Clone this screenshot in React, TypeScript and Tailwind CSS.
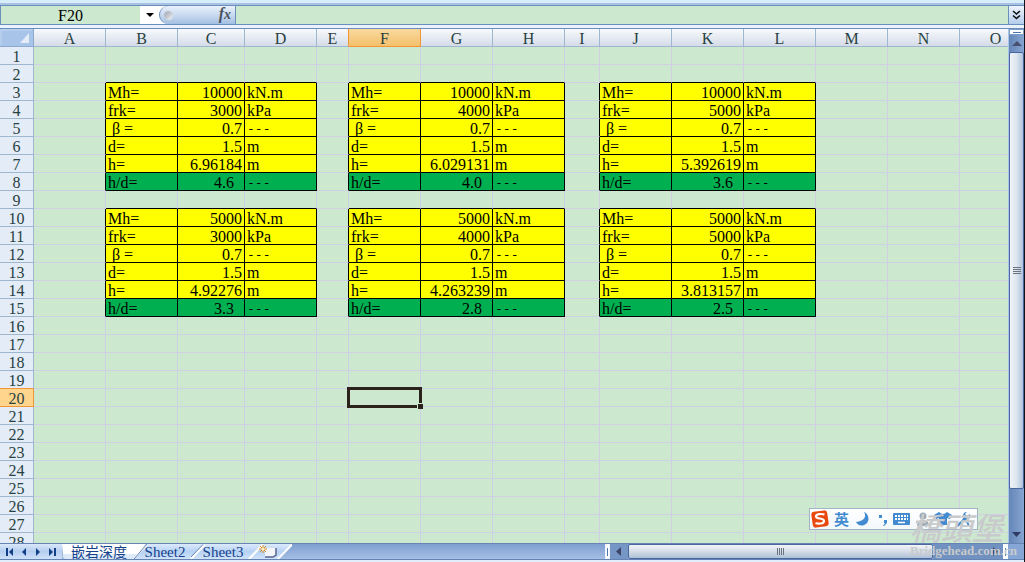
import React from "react";

type Column = { name: string; width: number };

const COLUMNS: Column[] = [
  { name: "A", width: 72 },
  { name: "B", width: 72 },
  { name: "C", width: 67 },
  { name: "D", width: 72 },
  { name: "E", width: 32 },
  { name: "F", width: 72 },
  { name: "G", width: 72 },
  { name: "H", width: 72 },
  { name: "I", width: 35 },
  { name: "J", width: 72 },
  { name: "K", width: 72 },
  { name: "L", width: 72 },
  { name: "M", width: 72 },
  { name: "N", width: 72 },
  { name: "O", width: 72 },
];

const ROW_COUNT = 28;
const ACTIVE = { col: 5, row: 20 };

type Block = { col: number; row: number; mh: string; frk: string; h: string; ratio: string };

const BLOCKS: Block[] = [
  { col: 1, row: 3, mh: "10000", frk: "3000", h: "6.96184", ratio: "4.6" },
  { col: 5, row: 3, mh: "10000", frk: "4000", h: "6.029131", ratio: "4.0" },
  { col: 9, row: 3, mh: "10000", frk: "5000", h: "5.392619", ratio: "3.6" },
  { col: 1, row: 10, mh: "5000", frk: "3000", h: "4.92276", ratio: "3.3" },
  { col: 5, row: 10, mh: "5000", frk: "4000", h: "4.263239", ratio: "2.8" },
  { col: 9, row: 10, mh: "5000", frk: "5000", h: "3.813157", ratio: "2.5" },
];

type CellData = { text: string; kind: "label" | "value" | "unit"; result: boolean };

const CELLS = new Map<string, CellData>();
for (const b of BLOCKS) {
  const lines = [
    ["Mh=", b.mh, "kN.m"],
    ["frk=", b.frk, "kPa"],
    ["β=", "0.7", "---"],
    ["d=", "1.5", "m"],
    ["h=", b.h, "m"],
    ["h/d=", b.ratio, "---"],
  ];
  lines.forEach(([label, value, unit], i) => {
    const result = i === 5;
    CELLS.set(`${b.col}:${b.row + i}`, { text: label, kind: "label", result });
    CELLS.set(`${b.col + 1}:${b.row + i}`, { text: value, kind: "value", result });
    CELLS.set(`${b.col + 2}:${b.row + i}`, { text: unit, kind: "unit", result });
  });
}

function CellText({ text }: { text: string }) {
  // The Greek letter takes a full-width slot, like a CJK character.
  if (text.startsWith("β")) {
    return (
      <>
        <span className="inline-block w-4 text-center">β</span>
        {text.slice(1)}
      </>
    );
  }
  return <>{text}</>;
}

function Cell({ col, row }: { col: number; row: number }) {
  const data = CELLS.get(`${col}:${row}`);
  const blackRight = data || CELLS.has(`${col + 1}:${row}`);
  const blackBottom = data || CELLS.has(`${col}:${row + 1}`);
  const active = col === ACTIVE.col && row === ACTIVE.row;
  const fill = data ? (data.result ? "bg-[#00b050]" : "bg-[#ffff00]") : "";
  const align = data?.kind === "value" ? (data.result ? "pr-[10px] text-right" : "pr-[2px] text-right") : "pl-[2px] text-left";
  const font = data?.text === "---" ? "font-['DejaVu_Sans_Mono',monospace] text-[13px]" : "text-base";
  return (
    <td
      className={`relative h-[18px] border-r border-b p-0 ${blackRight ? "border-r-black" : "border-r-[#d0d0e4]"} ${
        blackBottom ? "border-b-black" : "border-b-[#d0d0e4]"
      } ${fill}`}
    >
      {data && (
        <div className={`h-[17px] whitespace-nowrap leading-[20px] ${align} ${font}`}>
          <CellText text={data.text} />
        </div>
      )}
      {active && (
        <div className="absolute -top-[2px] -right-[2px] -bottom-[2px] -left-[2px] z-10 border-[3px] border-[#2c221c]">
          <span className="absolute -right-[4px] -bottom-[4px] size-[6px] border-t border-l border-[#cce8cf] bg-[#2c221c]" />
        </div>
      )}
    </td>
  );
}

function columnHeaderStyle(i: number) {
  if (i === ACTIVE.col) {
    return "border-[#f29536] bg-linear-to-b from-[#f9d99f] to-[#f3c16b] text-[#2b3f3d]";
  }
  if (i === ACTIVE.col - 1) {
    return "border-r-[#f29536] border-b-[#9eb6ce] bg-linear-to-b from-[#f7f9fc] to-[#d5dce8] text-[#274241]";
  }
  return "border-[#9eb6ce] bg-linear-to-b from-[#f7f9fc] to-[#d5dce8] text-[#274241]";
}

function rowHeaderStyle(row: number) {
  if (row === ACTIVE.row) return "border-[#f29536] bg-[#ffd58d]";
  if (row === ACTIVE.row - 1) return "border-r-[#9eb6ce] border-b-[#f29536] bg-[#e4ecf7]";
  return "border-[#9eb6ce] bg-[#e4ecf7]";
}

function Sheet() {
  return (
    <table className="w-[1032px] table-fixed border-separate border-spacing-0 text-black">
      <colgroup>
        <col style={{ width: 34 }} />
        {COLUMNS.map((c) => (
          <col key={c.name} style={{ width: c.width }} />
        ))}
      </colgroup>
      <thead>
        <tr>
          <th className="h-[18px] border-r border-b border-[#8ea9cf] bg-[#a9c4e9] p-0">
            <svg viewBox="0 0 33 17" className="block h-[17px] w-full" aria-hidden="true">
              <path d="M1 16V1H32" fill="none" stroke="#c3d8f2" />
              <path d="M29 4V14H20Z" fill="#e4ecf7" />
            </svg>
          </th>
          {COLUMNS.map((c, i) => (
            <th
              key={c.name}
              scope="col"
              className={`h-[18px] border-r border-b p-0 text-base font-normal ${columnHeaderStyle(i)}`}
            >
              <div className="h-[17px] leading-[20px]">{c.name}</div>
            </th>
          ))}
        </tr>
      </thead>
      <tbody>
        {Array.from({ length: ROW_COUNT }, (_, i) => i + 1).map((row) => (
          <tr key={row}>
            <th
              scope="row"
              className={`h-[18px] border-r border-b p-0 text-base font-normal text-[#274241] ${rowHeaderStyle(row)}`}
            >
              <div className="h-[17px] leading-[20px]">{row}</div>
            </th>
            {COLUMNS.map((c, col) => (
              <Cell key={c.name} col={col} row={row} />
            ))}
          </tr>
        ))}
      </tbody>
    </table>
  );
}

function FormulaBar() {
  return (
    <div className="flex h-5 shrink-0 border-y border-[#6b8fbd] bg-[#cce8cf]">
      <label className="flex w-[140px] border-l border-[#6b8fbd]">
        <input
          aria-label="Name box"
          defaultValue="F20"
          className="w-full bg-transparent pt-[2px] text-center text-base leading-4 text-black outline-none"
        />
      </label>
      <button type="button" aria-label="Cell names" className="flex w-[19px] items-center justify-center bg-white">
        <svg width="8" height="4" viewBox="0 0 8 4" aria-hidden="true">
          <path d="M0 0H8L4 4Z" fill="#000" />
        </svg>
      </button>
      <div className="flex w-[77px] bg-white">
        <button
          type="button"
          aria-label="Insert function"
          className="flex w-full items-center justify-between rounded-l-full border-r border-l border-[#6b8fbd] bg-linear-to-b from-[#e9f1fb] via-[#c9daf0] to-[#a4bfe3] pr-1 pl-1"
        >
          <span className="size-[9px] rounded-full bg-linear-to-br from-[#a4a9b3] via-[#c4c8cf] to-[#fafafa]" />
          <span className="font-['Liberation_Serif',serif] text-base leading-4 font-bold text-[#4c5360] italic">
            f<span className="text-sm">x</span>
          </span>
        </button>
      </div>
      <input aria-label="Formula" className="min-w-0 flex-1 bg-transparent px-1 text-base outline-none" />
      <button
        type="button"
        aria-label="Expand formula bar"
        className="flex w-4 items-center justify-center border-l border-[#6b8fbd] bg-linear-to-b from-[#eef5fd] to-[#b5cdec]"
      >
        <svg width="9" height="10" viewBox="0 0 9 10" fill="none" stroke="#111" strokeWidth="1.6" aria-hidden="true">
          <path d="M1 1L4.500 4L8 1M1 5.500L4.500 8.500L8 5.500" />
        </svg>
      </button>
    </div>
  );
}

function VerticalScroll() {
  return (
    <div className="flex w-4 shrink-0 flex-col border-l border-[#a9c4e9] bg-linear-to-r from-[#6486b7] to-[#86a5d2]">
      <div className="flex h-[6px] items-center justify-center border border-[#7d9dc8] bg-white">
        <span className="h-px w-2 bg-[#4a76ae]" />
      </div>
      <button type="button" aria-label="Scroll up" className="flex h-[17px] items-center justify-center">
        <svg width="10" height="5" viewBox="0 0 10 5" aria-hidden="true">
          <path d="M0 5L5 0L10 5Z" fill="#48506e" />
        </svg>
      </button>
      <div className="flex grow-[437] flex-col items-center justify-center gap-px rounded-xs border border-[#4b67a0] bg-linear-to-r from-[#f1f4f9] via-[#dde5ef] to-[#b1c3dc]">
        <span className="h-px w-2 bg-[#69727f]" />
        <span className="h-px w-2 bg-[#69727f]" />
        <span className="h-px w-2 bg-[#69727f]" />
        <span className="h-px w-2 bg-[#69727f]" />
      </div>
      <div className="grow-[38]" />
      <button type="button" aria-label="Scroll down" className="flex h-[17px] items-center justify-center">
        <svg width="9" height="5" viewBox="0 0 9 5" aria-hidden="true">
          <path d="M0 0H9L4.500 5Z" fill="#2f3a60" />
        </svg>
      </button>
    </div>
  );
}

const NAV = [
  { label: "First sheet", d: "M1 0H3V8H1ZM8 0V8L4 4Z" },
  { label: "Previous sheet", d: "M6 0V8L2 4Z" },
  { label: "Next sheet", d: "M2 0V8L6 4Z" },
  { label: "Last sheet", d: "M0 0V8L4 4ZM5 0H7V8H5Z" },
];

function SheetTab({ name }: { name: string }) {
  return (
    <button type="button" className="relative -ml-[14px] h-[15px] w-[72px] shrink-0">
      <svg viewBox="0 0 72 15" className="absolute inset-0 h-full w-full" aria-hidden="true">
        <path d="M0 15L14 0H72L58 15Z" fill="url(#tabFill)" />
        <path d="M0 15L14 0.500M58 15L72 0.500" stroke="#fff" strokeWidth="2" fill="none" />
        <path d="M-1 14L12 0.500M60 15L73 1" stroke="#6383b4" fill="none" />
      </svg>
      <span className="relative block pr-2 text-[15px] leading-[17px] text-[#15428b]">{name}</span>
    </button>
  );
}

function BottomBar() {
  return (
    <div className="flex h-[17px] shrink-0 border-y border-[#6684b3] bg-linear-to-b from-[#7e9fd0] to-[#a5bfe4]">
      <svg width="0" height="0" className="absolute" aria-hidden="true">
        <defs>
          <linearGradient id="tabFill" x1="0" y1="0" x2="0" y2="1">
            <stop offset="0" stopColor="#dceafb" />
            <stop offset="0.500" stopColor="#b6d1f3" />
            <stop offset="1" stopColor="#d0e3fa" />
          </linearGradient>
        </defs>
      </svg>
      <div className="flex w-[62px] shrink-0 justify-around bg-linear-to-b from-[#d9e7f9] via-[#b5cef0] to-[#cfe1f8] px-[2px]">
        {NAV.map((n) => (
          <button key={n.label} type="button" aria-label={n.label} className="flex w-3 items-center justify-center">
            <svg width="8" height="8" viewBox="0 0 8 8" aria-hidden="true">
              <path d={n.d} fill="#123f86" />
            </svg>
          </button>
        ))}
      </div>
      <button type="button" className="relative z-10 h-[15px] w-[85px] shrink-0">
        <svg viewBox="0 0 85 15" className="absolute inset-0 h-full w-full" aria-hidden="true">
          <path d="M0 0H84L71 15H5Q1 15 1 11Z" fill="#fff" />
          <path d="M1 10H75L71 15H5Q1 15 1 11Z" fill="#dceafa" />
          <path d="M72 15L85 0" stroke="#6383b4" />
        </svg>
        <span className="relative block pl-[9px] text-left font-['Noto_Sans_CJK_SC',sans-serif] text-sm leading-[15px] whitespace-nowrap text-[#15428b]">
          嵌岩深度
        </span>
      </button>
      <SheetTab name="Sheet2" />
      <SheetTab name="Sheet3" />
      <button type="button" aria-label="Insert worksheet" className="relative -ml-[14px] h-[15px] w-[43px] shrink-0">
        <svg viewBox="0 0 43 15" className="h-full w-full" aria-hidden="true">
          <path d="M0 15L14 0H43L29 15Z" fill="url(#tabFill)" />
          <path d="M0 15L14 0.500M29 15L43 0.500" stroke="#fff" strokeWidth="2" />
          <path d="M16 4H27V11L24 13H16Z" fill="#f3f5fb" />
          <path d="M27 4V11L24 13H16" fill="none" stroke="#55658c" strokeWidth="1.500" />
          <path d="M14 1V9M10 5H18M11 2L17 8M17 2L11 8" stroke="#d98a22" />
          <circle cx="14" cy="5" r="1.500" fill="#fff3bc" />
        </svg>
      </button>
      <div className="flex-[314]" />
      <div className="flex w-[5px] items-center justify-center border border-[#edf4fd] bg-white">
        <span className="h-2 w-px bg-[#4a76ae]" />
      </div>
      <button type="button" aria-label="Scroll left" className="flex w-[18px] items-center justify-center bg-[#7697c6]">
        <svg width="5" height="9" viewBox="0 0 5 9" aria-hidden="true">
          <path d="M5 0V9L0 4.500Z" fill="#3c4769" />
        </svg>
      </button>
      <div className="flex flex-[305] items-center justify-center gap-px rounded-xs border border-[#4b67a0] bg-linear-to-b from-[#f3f4f9] via-[#d4dde8] to-[#adc0d6]">
        <span className="h-[7px] w-px bg-[#69727f]" />
        <span className="h-[7px] w-px bg-[#69727f]" />
        <span className="h-[7px] w-px bg-[#69727f]" />
        <span className="h-[7px] w-px bg-[#69727f]" />
      </div>
      <div className="flex-[54] bg-[#7191c0]" />
      <button type="button" aria-label="Scroll right" className="flex w-4 items-center justify-center bg-[#7191c0]">
        <svg width="5" height="9" viewBox="0 0 5 9" aria-hidden="true">
          <path d="M0 0V9L5 4.500Z" fill="#3c4769" />
        </svg>
      </button>
      <div className="flex w-[5px] items-center justify-center bg-white">
        <span className="h-2 w-px bg-[#4a76ae]" />
      </div>
      <div className="w-4 bg-[#86a6d6]" />
    </div>
  );
}

function InputMethodBar() {
  return (
    <div className="absolute right-[46px] bottom-[32px] z-20 flex h-[22px] w-[169px] items-center border border-[#9fb5c5] bg-linear-to-b from-white to-[#f3f8fb]">
      <svg viewBox="0 0 167 20" className="absolute inset-0 h-full w-full" aria-hidden="true">
        <rect x="2" y="2" width="16" height="16" rx="3" fill="#e8490f" transform="rotate(-8 10 10)" />
        <path d="M14.500 5.500C11 4.500 6 5 6 7.500C6 10.500 14 8.500 14 12C14 15 8 15 5.500 14" fill="none" stroke="#fff" strokeWidth="2.200" />
        <g fill="#438bd0">
          <path d="M54 3C57 8 54 12 46 13C49 19 58 17 58.500 10C58.500 7 57 4 54 3Z" />
          <rect x="69" y="6" width="3" height="3" />
          <path d="M74 11H77V14L74 17H73L75 14H74Z" />
          <rect x="83" y="4" width="17" height="12" rx="1" />
          <path d="M129 3L124 6L126 10L129 9V16H137V9L140 10L142 6L137 3Q133 7 129 3Z" />
          <path d="M157 3Q153 3 153 7Q154 9 151 12L146 16L148 18L155 11L158 17H160L157 10Q161 8 160 5L157 7L155 5Z" />
        </g>
        <path d="M85 7H98M85 10H98" stroke="#fff" strokeWidth="2" strokeDasharray="2 1" />
        <path d="M88 13.500H95" stroke="#fff" strokeWidth="1.500" />
        <circle cx="113" cy="7" r="3.500" fill="#9caab8" />
        <path d="M107 17Q107 11 113 11Q119 11 119 17Z" fill="#9caab8" />
      </svg>
      <span className="relative pb-px pl-6 font-['Noto_Sans_CJK_SC',sans-serif] text-[15px] leading-5 font-bold text-[#438bd0]">英</span>
    </div>
  );
}

function Watermark() {
  return (
    <div className="pointer-events-none absolute right-[5px] bottom-[4px] z-30 w-[109px] text-[#c8cacb]">
      <div className="font-['Noto_Sans_CJK_TC',sans-serif] text-[31px] leading-[34px] font-medium whitespace-nowrap italic">橋頭堡</div>
      <div className="text-[13px] leading-[14px] font-bold whitespace-nowrap">Bridgehead.com.cn</div>
    </div>
  );
}

export default function App() {
  return (
    <div className="relative flex h-screen flex-col overflow-hidden border-r border-[#10131c] bg-[#cce8cf] font-['Liberation_Serif','Noto_Sans_CJK_SC',serif]">
      <div className="h-[3px] shrink-0 bg-[#d5eefa]" />
      <div className="h-[2px] shrink-0 bg-[#a9c2e4]" />
      <FormulaBar />
      <div className="h-[3px] shrink-0 bg-[#eaf2fc]" />
      <div className="flex min-h-0 flex-1 border-t border-[#6b8fbd]">
        <main className="min-w-0 flex-1 overflow-hidden">
          <Sheet />
        </main>
        <VerticalScroll />
      </div>
      <BottomBar />
      <div className="h-[2px] shrink-0 bg-[#e1edfb]" />
      <InputMethodBar />
      <Watermark />
    </div>
  );
}
